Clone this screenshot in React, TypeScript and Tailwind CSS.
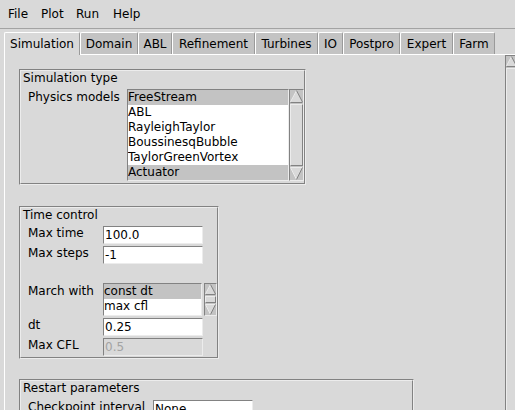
import React from "react";

function Arrow({ size, dir }: { size: number; dir: "up" | "down" }) {
  const s = size;
  const m = s / 2;
  if (dir === "up") {
    return (
      <svg width={s} height={s} className="block shrink-0">
        <polygon points={`${m},1 1,${s - 1} ${s - 1},${s - 1}`} fill="#d9d9d9" />
        <line x1={m} y1={0.5} x2={0.5} y2={s - 1} stroke="#ececec" strokeWidth={1} />
        <line x1={0.5} y1={s - 0.5} x2={s - 0.5} y2={s - 0.5} stroke="#828282" strokeWidth={1} />
        <line x1={m} y1={0.5} x2={s - 0.5} y2={s - 1} stroke="#828282" strokeWidth={1} />
      </svg>
    );
  }
  return (
    <svg width={s} height={s} className="block shrink-0">
      <polygon points={`1,1 ${s - 1},1 ${m},${s - 1}`} fill="#d9d9d9" />
      <line x1={0.5} y1={0.5} x2={s - 0.5} y2={0.5} stroke="#ececec" strokeWidth={1} />
      <line x1={0.5} y1={0.5} x2={m} y2={s - 0.5} stroke="#ececec" strokeWidth={1} />
      <line x1={s - 0.5} y1={0.5} x2={m} y2={s - 0.5} stroke="#828282" strokeWidth={1} />
    </svg>
  );
}

function VScroll({ outer, arrow, down = true }: { outer: string; arrow: number; down?: boolean }) {
  return (
    <div
      className={`${outer} shrink-0 flex flex-col border border-t-[#828282] border-l-[#828282] border-r-[#ececec] border-b-[#ececec] bg-[#c3c3c3]`}
    >
      <Arrow size={arrow} dir="up" />
      <div className="flex-1 my-[1px] border border-t-[#ececec] border-l-[#ececec] border-r-[#828282] border-b-[#828282] bg-[#d9d9d9]" />
      {down && <Arrow size={arrow} dir="down" />}
    </div>
  );
}

function ListBox({ cls, items, selected }: { cls: string; items: string[]; selected: number[] }) {
  return (
    <div
      className={`${cls} shrink-0 bg-white border border-t-[#828282] border-l-[#828282] border-r-[#ececec] border-b-[#ececec] overflow-hidden`}
    >
      {items.map((it, i) => (
        <div key={it} className={`h-[15px] whitespace-nowrap ${selected.includes(i) ? "bg-[#c3c3c3]" : ""}`}>
          {it}
        </div>
      ))}
    </div>
  );
}

function Entry({ value, disabled = false }: { value: string; disabled?: boolean }) {
  return (
    <div
      className={`w-[100px] h-[18px] shrink-0 border border-t-[#828282] border-l-[#828282] border-r-[#ececec] border-b-[#ececec] leading-[16px] pl-[1px] whitespace-nowrap ${
        disabled ? "bg-[#d9d9d9] text-[#a3a3a3]" : "bg-white"
      }`}
    >
      {value}
    </div>
  );
}

function Groove({ cls, children }: { cls: string; children: React.ReactNode }) {
  return (
    <div className={`${cls} shrink-0 border border-t-[#828282] border-l-[#828282] border-r-[#ececec] border-b-[#ececec]`}>
      <div className="h-full border border-t-[#ececec] border-l-[#ececec] border-r-[#828282] border-b-[#828282] flex flex-col">
        {children}
      </div>
    </div>
  );
}

const tabs: { name: string; w: string }[] = [
  { name: "Simulation", w: "w-[76px]" },
  { name: "Domain", w: "w-[58px]" },
  { name: "ABL", w: "w-[34px]" },
  { name: "Refinement", w: "w-[83px]" },
  { name: "Turbines", w: "w-[63px]" },
  { name: "IO", w: "w-[25px]" },
  { name: "Postpro", w: "w-[57px]" },
  { name: "Expert", w: "w-[53px]" },
  { name: "Farm", w: "w-[42px]" },
];

export default function App() {
  return (
    <div className="w-[515px] h-[410px] overflow-hidden bg-[#d9d9d9] font-['DejaVu_Sans',sans-serif] text-[12px] leading-[15px] text-black">
      {/* Menu bar */}
      <div className="h-[29px] border-b border-[#a3a3a3] flex pl-[2px] pt-[7px]">
        <div className="w-[33px] pl-[6px]">File</div>
        <div className="w-[35px] pl-[6px]">Plot</div>
        <div className="w-[37px] pl-[6px]">Run</div>
        <div className="pl-[6px]">Help</div>
      </div>

      {/* Tabs */}
      <div className="flex items-end h-[22px] mt-[3px] pl-[4px]">
        {tabs.map((t, i) =>
          i === 0 ? (
            <div
              key={t.name}
              className={`${t.w} h-[23px] -mb-[1px] relative z-10 shrink-0 bg-[#d9d9d9] border-t border-l border-r border-t-white border-l-white border-r-[#9a9a9a] rounded-t-[2px] text-center pt-[4px]`}
            >
              {t.name}
            </div>
          ) : (
            <div
              key={t.name}
              className={`${t.w} h-[22px] shrink-0 bg-[#c3c3c3] border-t border-l border-r border-t-white border-l-white border-r-[#9a9a9a] rounded-t-[2px] text-center pt-[4px]`}
            >
              {t.name}
            </div>
          )
        )}
      </div>

      {/* Notebook pane */}
      <div className="ml-[4px] border-l border-t border-white flex h-[356px]">
        <div className="w-[500px] shrink-0 pl-[14px] pt-[14px] flex flex-col items-start">
          {/* Simulation type */}
          <Groove cls="w-[287px] h-[116px]">
            <div className="pl-[2px]">Simulation type</div>
            <div className="flex mt-[3px]">
              <div className="w-[106px] shrink-0 pl-[7px] pt-[1px]">Physics models</div>
              <ListBox
                cls="w-[162px] h-[92px]"
                items={["FreeStream", "ABL", "RayleighTaylor", "BoussinesqBubble", "TaylorGreenVortex", "Actuator"]}
                selected={[0, 5]}
              />
              <VScroll outer="w-[15px] h-[92px]" arrow={13} />
            </div>
          </Groove>

          {/* Time control */}
          <div className="mt-[21px]">
            <Groove cls="w-[200px] h-[153px]">
              <div className="pl-[2px]">Time control</div>
              <div className="flex mt-[3px]">
                <div className="w-[82px] shrink-0 pl-[7px]">Max time</div>
                <Entry value="100.0" />
              </div>
              <div className="flex mt-[2px]">
                <div className="w-[82px] shrink-0 pl-[7px]">Max steps</div>
                <Entry value="-1" />
              </div>
              <div className="flex mt-[19px]">
                <div className="w-[82px] shrink-0 pl-[7px] pt-[1px]">March with</div>
                <ListBox cls="w-[99px] h-[33px]" items={["const dt", "max cfl"]} selected={[0]} />
                <div className="ml-[2px]">
                  <VScroll outer="w-[13px] h-[33px]" arrow={11} />
                </div>
              </div>
              <div className="flex mt-[2px]">
                <div className="w-[82px] shrink-0 pl-[7px]">dt</div>
                <Entry value="0.25" />
              </div>
              <div className="flex mt-[2px]">
                <div className="w-[82px] shrink-0 pl-[7px]">Max CFL</div>
                <Entry value="0.5" disabled />
              </div>
            </Groove>
          </div>

          {/* Restart parameters */}
          <div className="mt-[20px]">
            <Groove cls="w-[395px] h-[80px]">
              <div className="pl-[2px]">Restart parameters</div>
              <div className="flex mt-[4px]">
                <div className="w-[132px] shrink-0 pl-[7px] whitespace-nowrap">Checkpoint interval</div>
                <Entry value="None" />
              </div>
            </Groove>
          </div>
        </div>

        {/* Main vertical scrollbar */}
        <VScroll outer="w-[13px] h-[400px]" arrow={11} down={false} />
      </div>
    </div>
  );
}
